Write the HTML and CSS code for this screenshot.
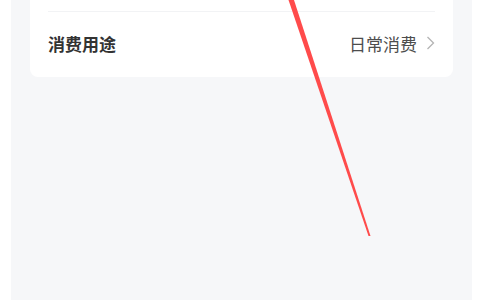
FILE: index.html
```html
<!DOCTYPE html>
<html lang="zh-CN">
<head>
    <meta charset="UTF-8">
    <meta name="viewport" content="width=device-width, initial-scale=1.0">
    <title>消费用途</title>
    <link rel="stylesheet" href="styles.css">
</head>
<body>
    <div class="page">
        <div class="card">
            <div class="row row-cut"></div>
            <div class="row">
                <div class="label">消费用途</div>
                <div class="value">
                    日常消费
                    <svg class="arrow" width="9" height="14" viewBox="0 0 9 14">
                        <path d="M1.5 1 L7.5 7 L1.5 13" fill="none" stroke="#b4b4b4" stroke-width="1.3"/>
                    </svg>
                </div>
            </div>
        </div>
    </div>
    <!-- mark drawn on top of screenshot -->
    <svg class="mark" width="480" height="300" viewBox="0 0 480 300">
        <polygon points="288.5,0 294,0 370.5,236 368.5,236" fill="#ff4b4b"/>
    </svg>
</body>
</html>
```

FILE: styles.css
```css
body{
    margin: 0;
    background: #fff;
    font-family: "Noto Sans CJK SC", "Noto Sans", sans-serif;
}
.page{
    margin: 0 8px 0 11px;
    height: 300px;
    background: #f6f7f9;
    padding: 0 19px;
    box-sizing: border-box;
}
.card{
    background: #fff;
    border-radius: 0 0 8px 8px;
    padding: 0 18px;
}
.row{
    display: flex;
    align-items: center;
    justify-content: space-between;
    height: 65px;
    padding-bottom: 3px;
    box-sizing: border-box;
}
.row-cut{
    height: 12px;
    padding: 0;
    border-bottom: 1px solid #f2f3f5;
}
.label{
    font-size: 17px;
    font-weight: bold;
    color: #333;
}
.value{
    display: flex;
    align-items: center;
    gap: 9px;
    font-size: 17px;
    color: #4d4d4d;
}
.arrow{
    display: block;
}
.mark{
    position: absolute;
    left: 0;
    top: 0;
}
```
